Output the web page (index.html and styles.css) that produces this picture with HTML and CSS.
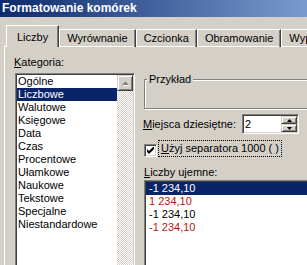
FILE: index.html
```html
<!DOCTYPE html>
<html lang="pl">
<head>
    <meta charset="UTF-8">
    <meta name="viewport" content="width=device-width, initial-scale=1.0">
    <title>Formatowanie komórek</title>
    <link rel="stylesheet" href="styles.css">
</head>
<body>
    <div class="dialog">
        <div class="titlebar">Formatowanie komórek</div>

        <div class="tabs">
            <div class="tab active">Liczby</div>
            <div class="tab">Wyrównanie</div>
            <div class="tab">Czcionka</div>
            <div class="tab">Obramowanie</div>
            <div class="tab">Wypełnienie</div>
        </div>

        <div class="panel">
            <div class="colLeft">
                <div class="label"><u>K</u>ategoria:</div>
                <div class="listbox categories">
                    <ul class="items">
                        <li>Ogólne</li>
                        <li class="selected">Liczbowe</li>
                        <li>Walutowe</li>
                        <li>Księgowe</li>
                        <li>Data</li>
                        <li>Czas</li>
                        <li>Procentowe</li>
                        <li>Ułamkowe</li>
                        <li>Naukowe</li>
                        <li>Tekstowe</li>
                        <li>Specjalne</li>
                        <li>Niestandardowe</li>
                    </ul>
                    <div class="scrollbar">
                        <div class="scrollBtn">
                            <svg width="7" height="5" viewBox="0 0 7 5">
                                <path d="M1 5h7L4.5 1.5z" fill="#fff"/>
                                <path d="M0 4h7L3.5 0.5z" fill="#808080"/>
                            </svg>
                        </div>
                        <div class="track"></div>
                    </div>
                </div>
            </div>

            <div class="colRight">
                <fieldset class="sample">
                    <legend>Przykład</legend>
                    <div class="sampleBody"></div>
                </fieldset>

                <div class="decimals">
                    <div class="decimalsLabel"><u>M</u>iejsca dziesiętne:</div>
                    <div class="spin">
                        <span class="spinValue">2</span>
                        <div class="spinBtns">
                            <div class="spinBtn">
                                <svg width="5" height="3" viewBox="0 0 5 3"><path d="M0 3h5L2.5 0z" fill="#000"/></svg>
                            </div>
                            <div class="spinBtn">
                                <svg width="5" height="3" viewBox="0 0 5 3"><path d="M0 0h5L2.5 3z" fill="#000"/></svg>
                            </div>
                        </div>
                    </div>
                </div>

                <div class="checkRow">
                    <span class="checkbox">
                        <svg width="7" height="7" viewBox="0 0 7 7"><path d="M0 2v3l2 2 5-5V-1L2 4z" fill="#000"/></svg>
                    </span>
                    <span class="focusText"><u>U</u>żyj separatora 1000 ( )</span>
                </div>

                <div class="label"><u>L</u>iczby ujemne:</div>
                <div class="listbox negatives">
                    <ul class="items">
                        <li class="selected">-1 234,10</li>
                        <li class="red">1 234,10</li>
                        <li>-1 234,10</li>
                        <li class="red">-1 234,10</li>
                    </ul>
                </div>
            </div>
        </div>
    </div>
</body>
</html>
```

FILE: styles.css
```css
*{
    box-sizing: border-box;
}

body{
    margin:0;
    background:#d4d0c8;
    overflow:hidden;
    font-family: "Liberation Sans", Arial, sans-serif;
    font-size:11px;
    line-height:13px;
    color:#000;
}

.dialog{
    width:307px;
    height:265px;
    overflow:hidden;
}

.titlebar{
    height:17px;
    padding-left:2px;
    background:linear-gradient(to right, #0c2a6c, #7a9ace);
    color:#fff;
    font-weight:bold;
    font-size:12px;
    line-height:16px;
    white-space:nowrap;
}

/* tab strip */

.tabs{
    display:flex;
    align-items:flex-end;
    margin-top:8px;
    padding-left:6px;
    height:22px;
    margin-bottom:-1px;
}

.tab{
    height:18px;
    padding:2px 7px 0;
    border-top:solid 1px #fff;
    border-left:solid 1px #fff;
    border-right:solid 1px #404040;
    box-shadow:inset -1px 0 #808080;
    white-space:nowrap;
}

.tab.active{
    position:relative;
    z-index:1;
    height:22px;
    padding:5px 10px 0;
    background:#d4d0c8;
}

.panel{
    display:flex;
    margin-left:4px;
    height:220px;
    padding-top:9px;
    border-top:solid 1px #fff;
    border-left:solid 1px #fff;
}

.label{
    white-space:nowrap;
}

/* left column */

.colLeft{
    padding-left:9px;
}

.colLeft .label{
    margin-bottom:4px;
}

.listbox{
    display:flex;
    background:#fff;
    border:solid 1px;
    border-color:#808080 #fff #fff #808080;
    box-shadow:inset 1px 1px #404040, inset -1px -1px #d4d0c8;
    padding:1px;
}

.categories{
    width:120px;
    height:200px;
    margin-left:1px;
}

.items{
    flex:1;
    list-style:none;
    margin:0;
    padding:0;
}

.items li{
    height:13px;
    padding-left:1px;
    white-space:nowrap;
}

.items li.selected{
    background:#0a246a;
    color:#fff;
}

.items li.red{
    color:#b81414;
}

.scrollbar{
    width:16px;
    display:flex;
    flex-direction:column;
}

.scrollBtn{
    height:16px;
    display:flex;
    align-items:center;
    justify-content:center;
    background:#d4d0c8;
    border:solid 1px;
    border-color:#d4d0c8 #404040 #404040 #d4d0c8;
    box-shadow:inset 1px 1px #fff, inset -1px -1px #808080;
}

.track{
    flex:1;
    background:repeating-conic-gradient(#d4d0c8 0 25%, #fff 0 50%) 0 0/2px 2px;
}

/* right column */

.colRight{
    width:172px;
    flex-shrink:0;
    margin-left:8px;
    padding-left:1px;
}

.sample{
    margin:17px 0 0;
    padding:0;
    border:solid 1px #808080;
    box-shadow:1px 1px #fff, inset 1px 1px #fff;
}

.sample legend{
    margin-left:2px;
    padding:0 2px;
    background:#d4d0c8;
}

.sampleBody{
    height:22px;
}

.decimals{
    display:flex;
    align-items:center;
    margin-top:5px;
    margin-left:-1px;
}

.decimalsLabel{
    width:99px;
    white-space:nowrap;
}

.spin{
    display:flex;
    width:57px;
    height:20px;
    background:#fff;
    border:solid 1px;
    border-color:#808080 #fff #fff #808080;
    box-shadow:inset 1px 1px #404040, inset -1px -1px #d4d0c8;
    padding:1px;
}

.spinValue{
    flex:1;
    padding-left:1px;
    line-height:16px;
}

.spinBtns{
    width:16px;
    display:flex;
    flex-direction:column;
}

.spinBtn{
    flex:1;
    display:flex;
    align-items:center;
    justify-content:center;
    background:#d4d0c8;
    border:solid 1px;
    border-color:#d4d0c8 #404040 #404040 #d4d0c8;
    box-shadow:inset 1px 1px #fff, inset -1px -1px #808080;
}

.checkRow{
    display:flex;
    align-items:flex-end;
    margin-top:6px;
}

.checkbox{
    width:13px;
    height:13px;
    display:flex;
    align-items:center;
    justify-content:center;
    background:#fff;
    border:solid 1px;
    border-color:#808080 #fff #fff #808080;
    box-shadow:inset 1px 1px #404040, inset -1px -1px #d4d0c8;
}

.focusText{
    margin-left:1px;
    padding:1px 2px;
    border:dotted 1px #000;
    white-space:nowrap;
}

.colRight .label{
    margin-top:9px;
    margin-bottom:1px;
}

.negatives{
    height:100px;
}

.negatives .items li{
    padding-left:3px;
}
```
